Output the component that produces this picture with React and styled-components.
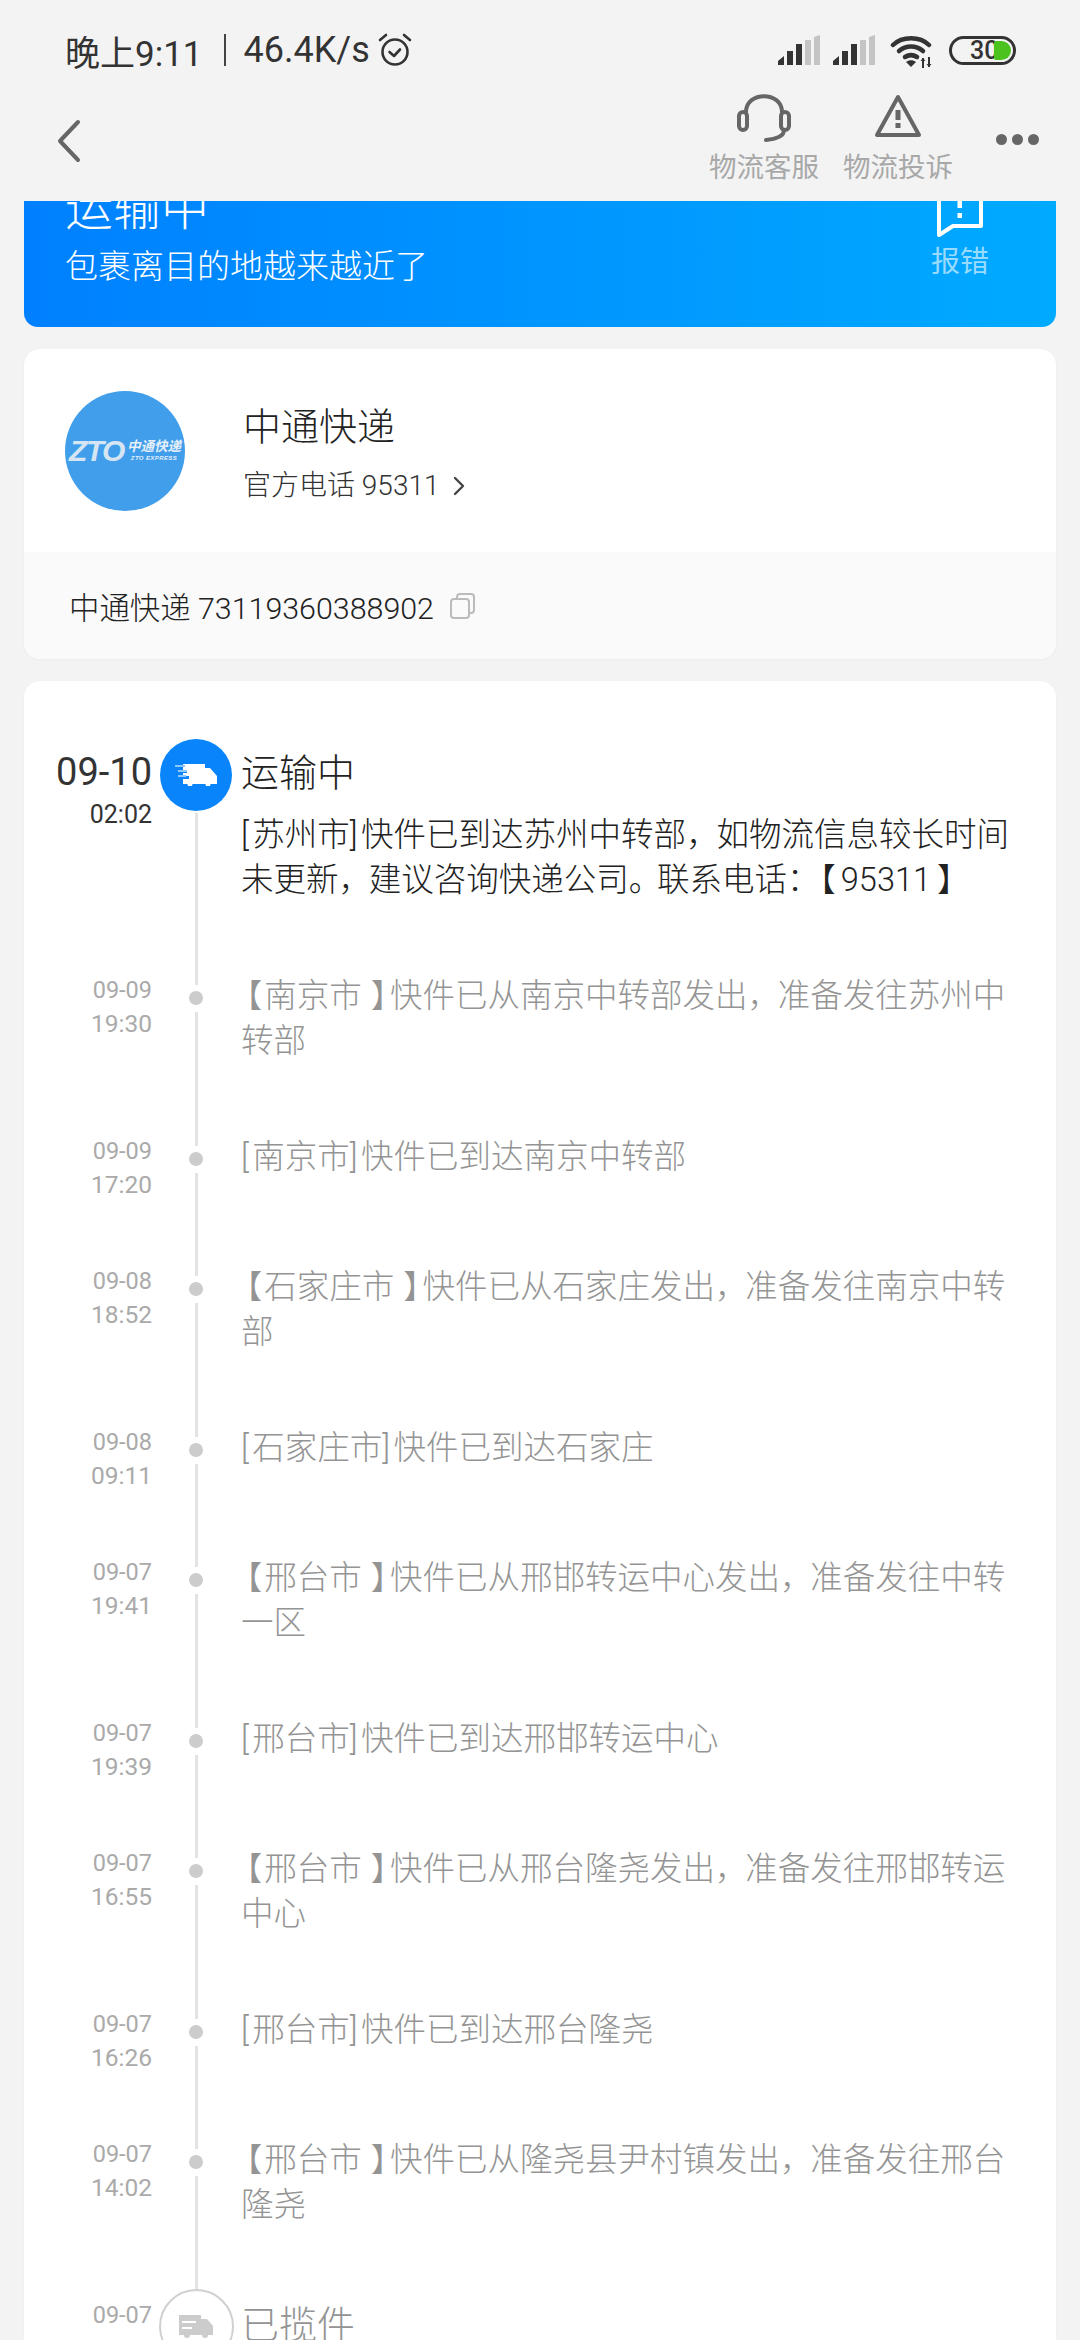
import React from 'react'
import styled, { createGlobalStyle } from 'styled-components'

const GlobalStyle = createGlobalStyle`
  html, body {
    margin: 0;
    padding: 0;
    background: #f3f3f3;
  }
  body {
    font-family: Roboto, "Noto Sans CJK SC", sans-serif;
    font-weight: 400;
  }
  * {
    box-sizing: border-box;
  }
`

const Page = styled.div`
  width: 1080px;
  height: 2340px;
  overflow: hidden;
  background: #f3f3f3;
`

const StatusBar = styled.div`
  height: 100px;
  padding: 0 64px 0 65px;
  display: flex;
  align-items: center;
  color: #333;
  font-size: 35px;
`
const StatusLeft = styled.div`
  display: flex;
  align-items: center;
  flex: 1;
`
const Divider = styled.span`
  width: 2px;
  height: 32px;
  background: #444;
  margin: 0 18px 0 21px;
`
const Speed = styled.span`
  font-size: 36px;
`
const StatusRight = styled.div`
  display: flex;
  align-items: center;
`
const Battery = styled.div`
  width: 67px;
  height: 29px;
  margin-left: 15px;
  border: 3px solid #333;
  border-radius: 15px;
  display: flex;
  align-items: center;
  padding-left: 18px;
  position: relative;
  font-size: 25px;
  font-weight: 500;
  line-height: 1;
  color: #333;
`
const BatteryLevel = styled.span`
  position: absolute;
  right: 2px;
  top: 2px;
  bottom: 2px;
  width: 17px;
  background: #4cc21f;
  border-radius: 2px 10px 10px 2px;
`

const NavBar = styled.div`
  height: 101px;
  padding: 0 41px 0 56px;
  display: flex;
  align-items: flex-start;
`
const BackButton = styled.div`
  margin-top: 19px;
  flex: 1;
  line-height: 0;
`
const NavAction = styled.div`
  width: 110px;
  margin-right: 24px;
  margin-top: -6px;
  display: flex;
  flex-direction: column;
  align-items: center;
  white-space: nowrap;
  color: #a8a8a8;
  font-size: 27.5px;
  line-height: 36px;
`
const NavIcon = styled.div`
  height: 50px;
  margin-bottom: 6px;
  line-height: 0;
`
const MoreDots = styled.div`
  display: flex;
  gap: 5px;
  margin: 34px 0 0 19px;
`
const MoreDot = styled.span`
  width: 11px;
  height: 11px;
  border-radius: 50%;
  background: #666;
`

const Banner = styled.div`
  height: 126px;
  margin: 0 24px;
  padding: 0 67px 37px 41px;
  overflow: hidden;
  display: flex;
  align-items: flex-end;
  justify-content: space-between;
  color: #fff;
  background: linear-gradient(90deg, #0080ff, #00aaff);
  border-radius: 0 0 14px 14px;
`
const BannerTitle = styled.div`
  font-size: 48px;
  line-height: 60px;
  margin-bottom: 5px;
  font-weight: 300;
`
const BannerText = styled.div`
  font-size: 33px;
  line-height: 46px;
  font-weight: 300;
`
const ReportButton = styled.div`
  display: flex;
  flex-direction: column;
  align-items: center;
  color: rgba(255, 255, 255, 0.62);
  font-size: 29px;
  line-height: 40px;
  margin-bottom: 8px;
`
const ReportIcon = styled.div`
  line-height: 0;
  margin-bottom: 5px;
`

const Card = styled.div`
  margin: 22px 24px 0;
  background: #fff;
  border-radius: 16px;
  overflow: hidden;
  box-shadow: 0 1px 3px rgba(0, 0, 0, 0.03);
`
const CompanyRow = styled.div`
  height: 203px;
  padding-left: 41px;
  display: flex;
  align-items: center;
  gap: 58px;
`
const Logo = styled.div`
  width: 120px;
  height: 120px;
  border-radius: 50%;
  background: #409eeb;
  display: flex;
  align-items: center;
  justify-content: center;
  gap: 3px;
  color: #e4eff9;
`
const LogoMark = styled.span`
  font-family: "Liberation Sans", sans-serif;
  font-size: 30px;
  font-weight: 700;
  font-style: italic;
  letter-spacing: -1.5px;
  line-height: 1;
  color: #d6e5f3;
`
const LogoWords = styled.div`
  display: flex;
  flex-direction: column;
  align-items: center;
  font-style: italic;
  font-weight: 700;
`
const LogoCn = styled.span`
  font-size: 13.5px;
  line-height: 15px;
`
const LogoEn = styled.span`
  font-family: "Liberation Sans", sans-serif;
  font-size: 6px;
  line-height: 8px;
  letter-spacing: 0.4px;
`
const CompanyInfo = styled.div`
  padding-top: 7px;
`
const CompanyName = styled.div`
  font-size: 38px;
  line-height: 50px;
  color: #222;
  margin-bottom: 14px;
  font-weight: 300;
`
const CompanyPhone = styled.div`
  display: flex;
  align-items: center;
  gap: 14px;
  font-size: 28px;
  line-height: 40px;
  font-weight: 300;
  color: #333;
`
const TrackingRow = styled.div`
  height: 107px;
  padding-left: 45px;
  display: flex;
  align-items: center;
  gap: 16px;
  background: #fafafa;
  font-size: 30.4px;
  font-weight: 300;
  color: #222;
`

const TimelineCard = styled(Card)`
  padding-top: 58px;
  height: 1700px;
`
const Row = styled.div`
  display: grid;
  grid-template-columns: 136px 72px 1fr;
`
const DateCol = styled.div`
  padding: ${p => (p.$active ? '10px' : '0')} 8px 62.5px 0;
  text-align: right;
  font-size: ${p => (p.$active ? '25px' : '24.5px')};
  line-height: 34px;
  color: ${p => (p.$active ? '#333' : '#aaa')};
`
const BigDate = styled.div`
  font-size: 38px;
  line-height: 46px;
  margin-bottom: 3px;
`
const SmallDate = styled.span`
  font-size: 23.5px;
`
const Rail = styled.div`
  display: flex;
  flex-direction: column;
  align-items: center;
  margin-top: ${p => (p.$pulled ? '-9px' : '0')};
`
const RailLine = styled.div`
  width: 3px;
  background: #e3e3e3;
  flex: ${p => (p.$top ? '0 0 12px' : '1')};
`
const RailDot = styled.div`
  width: 14px;
  height: 14px;
  border-radius: 50%;
  background: #ccc;
  margin: 6px 0 7px;
`
const ActiveCircle = styled.div`
  width: 72px;
  height: 72px;
  border-radius: 50%;
  background: #0a84fb;
  display: flex;
  align-items: center;
  justify-content: center;
  margin-bottom: 2px;
`
const DoneCircle = styled.div`
  width: 75px;
  height: 75px;
  flex: none;
  border-radius: 50%;
  background: #fff;
  border: 2px solid #d0d0d0;
  display: flex;
  align-items: center;
  justify-content: center;
`
const Content = styled.div`
  padding: ${p => (p.$active ? '8px 34px 70px 9px' : '1px 34px 69.5px 9px')};
  font-size: 32.5px;
  line-height: 45px;
  font-weight: 300;
  color: ${p => (p.$active ? '#222' : '#949494')};
`
const StepTitle = styled.div`
  font-size: 38px;
  line-height: 52px;
  color: ${p => (p.$muted ? '#949494' : '#222')};
  margin-bottom: 14px;
`
// half-width punctuation plus a little room, as the reference's font sets it
const Punct = styled.span`
  font-feature-settings: "halt";
  margin: ${p => p.$margin};
`
const PhoneBracket = styled.span`
  margin: ${p => p.$margin};
`

const punctMargins = {
  '【': '0 2px 0 5px',
  '】': '0 3px 0 9px',
  '[': '0 3.5px 0 0',
  ']': '0 3.5px 0 0',
  '，': '0 14px 0 0',
  '。': '0 12px 0 0'
}

const renderText = text =>
  text.split(/([【】[\]，。])/).map((part, i) =>
    punctMargins[part]
      ? <Punct key={i} $margin={punctMargins[part]}>{part}</Punct>
      : part
  )

const events = [
  ['09-09', '19:30', '【南京市】快件已从南京中转部发出，准备发往苏州中转部'],
  ['09-09', '17:20', '[南京市]快件已到达南京中转部'],
  ['09-08', '18:52', '【石家庄市】快件已从石家庄发出，准备发往南京中转部'],
  ['09-08', '09:11', '[石家庄市]快件已到达石家庄'],
  ['09-07', '19:41', '【邢台市】快件已从邢邯转运中心发出，准备发往中转一区'],
  ['09-07', '19:39', '[邢台市]快件已到达邢邯转运中心'],
  ['09-07', '16:55', '【邢台市】快件已从邢台隆尧发出，准备发往邢邯转运中心'],
  ['09-07', '16:26', '[邢台市]快件已到达邢台隆尧'],
  ['09-07', '14:02', '【邢台市】快件已从隆尧县尹村镇发出，准备发往邢台隆尧']
]

const SignalIcon = ({ ml = 0 }) => (
  <svg width="42" height="30" viewBox="0 0 42 30" style={{ marginLeft: ml }}>
    <path d="M0 30v-4l6-5v9z" fill="#333" />
    <rect x="9" y="16" width="6" height="14" fill="#333" />
    <rect x="18" y="9" width="6" height="21" fill="#333" />
    <rect x="27" y="5" width="6" height="25" fill="#c4c4c4" />
    <path d="M36 30V2l6-2v30z" fill="#c4c4c4" />
  </svg>
)

const WifiIcon = () => (
  <svg width="44" height="34" viewBox="0 0 44 34" style={{ marginLeft: 15, marginTop: 4 }}>
    <g fill="none" stroke="#333" strokeWidth="4.500" strokeLinecap="round">
      <path d="M3 10C12 1 30 1 39 10" />
      <path d="M9 16c7-6 17-6 24 0" />
      <path d="M15 22c4-2.500 8-2.500 12 0" />
    </g>
    <path d="M21 32l-5-5c3-2.500 7-2.500 10 0z" fill="#333" />
    <path d="M33 23v10M39 22v10" stroke="#333" strokeWidth="2" />
    <path d="M30.500 26l2.500-3 2.500 3zM36.500 29l2.500 3 2.500-3z" fill="#333" />
  </svg>
)

const AlarmIcon = () => (
  <svg width="34" height="34" viewBox="0 0 34 34" style={{ marginLeft: 8 }}>
    <g fill="none" stroke="#333" strokeWidth="2.600" strokeLinecap="round" strokeLinejoin="round">
      <circle cx="17" cy="19" r="12.500" />
      <path d="M11.500 19l4.500 4 6-6.500" />
      <path d="M2 7l6-5M32 7l-6-5" />
    </g>
  </svg>
)

const BackIcon = () => (
  <svg width="26" height="44" viewBox="0 0 26 44">
    <path d="M22 3L4 22l18 19" fill="none" stroke="#666" strokeWidth="4" strokeLinecap="round" strokeLinejoin="round" />
  </svg>
)

const HeadsetIcon = () => (
  <svg width="56" height="48" viewBox="0 0 56 48">
    <g fill="none" stroke="#666" strokeWidth="4" strokeLinecap="round">
      <path d="M10 18C10 -3 46 -3 46 18" />
      <rect x="3" y="18" width="8" height="18" rx="4" />
      <rect x="45" y="18" width="8" height="18" rx="4" />
      <path d="M48 36c0 6-8 9-18 10" />
    </g>
  </svg>
)

const WarningIcon = () => (
  <svg width="48" height="44" viewBox="0 0 48 44">
    <path d="M24 3L3 41h42z" fill="none" stroke="#666" strokeWidth="4" strokeLinejoin="round" />
    <rect x="21.500" y="16" width="5" height="10" fill="#666" />
    <rect x="21.500" y="29" width="5" height="5" fill="#666" />
  </svg>
)

const ReportBubble = () => (
  <svg width="48" height="66" viewBox="0 0 48 66">
    <path d="M3 3h42v52H17L3 64z" fill="none" stroke="#fff" strokeWidth="4" strokeLinejoin="round" />
    <rect x="21.500" y="18" width="4.500" height="19" fill="#fff" />
    <rect x="21.500" y="42" width="4.500" height="5" fill="#fff" />
  </svg>
)

const ChevronIcon = () => (
  <svg width="12" height="20" viewBox="0 0 12 20">
    <path d="M2 2l8 8-8 8" fill="none" stroke="#444" strokeWidth="2.400" strokeLinecap="round" strokeLinejoin="round" />
  </svg>
)

const CopyIcon = () => (
  <svg width="25" height="26" viewBox="0 0 25 26">
    <g fill="none" stroke="#bbb" strokeWidth="2">
      <rect x="1" y="6" width="18" height="19" rx="3" />
      <path d="M7 6V4a3 3 0 0 1 3-3h11a3 3 0 0 1 3 3v13a3 3 0 0 1-3 3h-2" />
    </g>
  </svg>
)

const FastTruck = () => (
  <svg width="42" height="22" viewBox="0 0 42 22">
    <path d="M8 0h22v4h5l7 8v8H8v-5h6v-3H8V9h4V6H8z" fill="#fff" />
    <circle cx="15" cy="20" r="2.500" fill="#fff" />
    <circle cx="33" cy="20" r="2.500" fill="#fff" />
    <path d="M0 1h10v2H0zM3 6h9v2H3zM3 11h8v2H3z" fill="#8cc8ff" />
  </svg>
)

const GrayTruck = () => (
  <svg width="34" height="24" viewBox="0 0 34 24">
    <path d="M0 1h22v4h6l6 7v9H0z" fill="#ccc" />
    <path d="M3 7h14v2H3zM3 13h10v2H3z" fill="#fff" />
    <circle cx="8" cy="21" r="3" fill="#ccc" />
    <circle cx="26" cy="21" r="3" fill="#ccc" />
  </svg>
)

const App = () => {
  return (
    <Page>
      <GlobalStyle />
      <StatusBar>
        <StatusLeft>
          晚上9:11<Divider /><Speed>46.4K/s</Speed><AlarmIcon />
        </StatusLeft>
        <StatusRight>
          <SignalIcon />
          <SignalIcon ml={13} />
          <WifiIcon />
          <Battery>30<BatteryLevel /></Battery>
        </StatusRight>
      </StatusBar>
      <NavBar>
        <BackButton><BackIcon /></BackButton>
        <NavAction>
          <NavIcon><HeadsetIcon /></NavIcon>
          物流客服
        </NavAction>
        <NavAction>
          <NavIcon><WarningIcon /></NavIcon>
          物流投诉
        </NavAction>
        <MoreDots><MoreDot /><MoreDot /><MoreDot /></MoreDots>
      </NavBar>
      <Banner>
        <div>
          <BannerTitle>运输中</BannerTitle>
          <BannerText>包裹离目的地越来越近了</BannerText>
        </div>
        <ReportButton>
          <ReportIcon><ReportBubble /></ReportIcon>
          报错
        </ReportButton>
      </Banner>
      <Card>
        <CompanyRow>
          <Logo>
            <LogoMark>ZTO</LogoMark>
            <LogoWords>
              <LogoCn>中通快递</LogoCn>
              <LogoEn>ZTO EXPRESS</LogoEn>
            </LogoWords>
          </Logo>
          <CompanyInfo>
            <CompanyName>中通快递</CompanyName>
            <CompanyPhone>官方电话 95311<ChevronIcon /></CompanyPhone>
          </CompanyInfo>
        </CompanyRow>
        <TrackingRow>
          中通快递 73119360388902
          <CopyIcon />
        </TrackingRow>
      </Card>
      <TimelineCard>
        <Row>
          <DateCol $active>
            <BigDate>09-10</BigDate>
            02:02
          </DateCol>
          <Rail>
            <ActiveCircle><FastTruck /></ActiveCircle>
            <RailLine />
          </Rail>
          <Content $active>
            <StepTitle>运输中</StepTitle>
            {renderText('[苏州市]快件已到达苏州中转部，如物流信息较长时间未更新，建议咨询快递公司。联系电话：')}
            <PhoneBracket $margin="0 5px 0 0">【</PhoneBracket>95311<PhoneBracket $margin="0 0 0 6px">】</PhoneBracket>
          </Content>
        </Row>
        {events.map(([date, time, text]) => (
          <Row key={date + time}>
            <DateCol><SmallDate>{date}</SmallDate><br />{time}</DateCol>
            <Rail>
              <RailLine $top />
              <RailDot />
              <RailLine />
            </Rail>
            <Content>{renderText(text)}</Content>
          </Row>
        ))}
        <Row>
          <DateCol><SmallDate>09-07</SmallDate><br />14:00</DateCol>
          <Rail $pulled>
            <DoneCircle><GrayTruck /></DoneCircle>
          </Rail>
          <Content>
            <StepTitle $muted>已揽件</StepTitle>
          </Content>
        </Row>
      </TimelineCard>
    </Page>
  )
}

export default App
